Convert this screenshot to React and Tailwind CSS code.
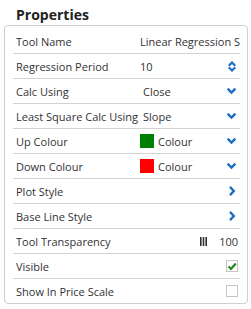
import React from "react";

const BLUE = "#1b6ec2";

function ChevronDown() {
  return (
    <svg width="9" height="7" viewBox="0 0 9 7" className="ml-auto shrink-0">
      <polyline points="1.5,1.5 4.5,4.5 7.5,1.5" fill="none" stroke={BLUE} strokeWidth="2.4" strokeLinecap="square" />
    </svg>
  );
}

function ChevronRight() {
  return (
    <svg width="7" height="10" viewBox="0 0 7 10" className="ml-auto shrink-0">
      <polyline points="1.8,1.8 4.8,5 1.8,8.2" fill="none" stroke={BLUE} strokeWidth="2.4" strokeLinecap="square" />
    </svg>
  );
}

function Spinner() {
  return (
    <svg width="8" height="11" viewBox="0 0 8 11" className="ml-auto shrink-0">
      <polyline points="1.5,4 4,1.5 6.5,4" fill="none" stroke={BLUE} strokeWidth="2.2" strokeLinecap="square" />
      <polyline points="1.5,7 4,9.5 6.5,7" fill="none" stroke={BLUE} strokeWidth="2.2" strokeLinecap="square" />
    </svg>
  );
}

function Bars() {
  return (
    <svg width="7" height="9" viewBox="0 0 7 9" className="shrink-0">
      <rect x="0" y="0" width="1.6" height="9" fill="#333" />
      <rect x="2.7" y="0" width="1.6" height="9" fill="#333" />
      <rect x="5.4" y="0" width="1.6" height="9" fill="#333" />
    </svg>
  );
}

function Checkbox({ checked }) {
  return (
    <div className="ml-auto mr-[-2px] w-[12px] h-[12px] border border-[#c4c4c4] bg-white flex items-center justify-center shrink-0">
      {checked && (
        <svg width="10" height="9" viewBox="0 0 10 9">
          <polyline points="1.5,4.5 4,7 8.8,1.5" fill="none" stroke="#1d8a1d" strokeWidth="2.2" />
        </svg>
      )}
    </div>
  );
}

function Row({ label, children, last }) {
  return (
    <div
      className={
        "grid grid-cols-[124px_103px] items-center " +
        (last ? "h-[24px]" : "h-[25px] border-b border-[#d2d2d2]")
      }
    >
      <div className="pl-[3px] whitespace-nowrap">{label}</div>
      <div className="pl-[3px] pr-[4px] flex items-center overflow-hidden whitespace-nowrap h-full">
        {children}
      </div>
    </div>
  );
}

export default function App() {
  return (
    <div className="w-[251px] h-[309px] bg-white text-[#333] font-['Open_Sans',sans-serif]">
      <div className="pl-4 pt-[5px] text-[14px] font-bold leading-[19px] text-[#222]">Properties</div>
      <div className="ml-1 mt-[1px] w-[244px] border border-[#cfcfcf] rounded-[4px] pl-2 pr-[7px] pt-[3px] text-[11px] leading-[15px]">
        <Row label="Tool Name">
          <span>Linear Regression Slope</span>
        </Row>
        <Row label="Regression Period">
          <span>10</span>
          <Spinner />
        </Row>
        <Row label="Calc Using">
          <span className="pl-[3px]">Close</span>
          <ChevronDown />
        </Row>
        <Row label="Least Square Calc Using">
          <span className="pl-[3px]">Slope</span>
          <ChevronDown />
        </Row>
        <Row label="Up Colour">
          <span className="w-[14px] h-[14px] bg-[#008000] shrink-0" />
          <span className="ml-[4px]">Colour</span>
          <ChevronDown />
        </Row>
        <Row label="Down Colour">
          <span className="w-[14px] h-[14px] bg-[#ff0000] shrink-0" />
          <span className="ml-[4px]">Colour</span>
          <ChevronDown />
        </Row>
        <Row label="Plot Style">
          <ChevronRight />
        </Row>
        <Row label="Base Line Style">
          <ChevronRight />
        </Row>
        <Row label="Tool Transparency">
          <div className="ml-auto mr-[-2px] flex items-center">
            <Bars />
            <span className="ml-[12px]">100</span>
          </div>
        </Row>
        <Row label="Visible">
          <Checkbox checked />
        </Row>
        <Row label="Show In Price Scale" last>
          <Checkbox />
        </Row>
      </div>
    </div>
  );
}
